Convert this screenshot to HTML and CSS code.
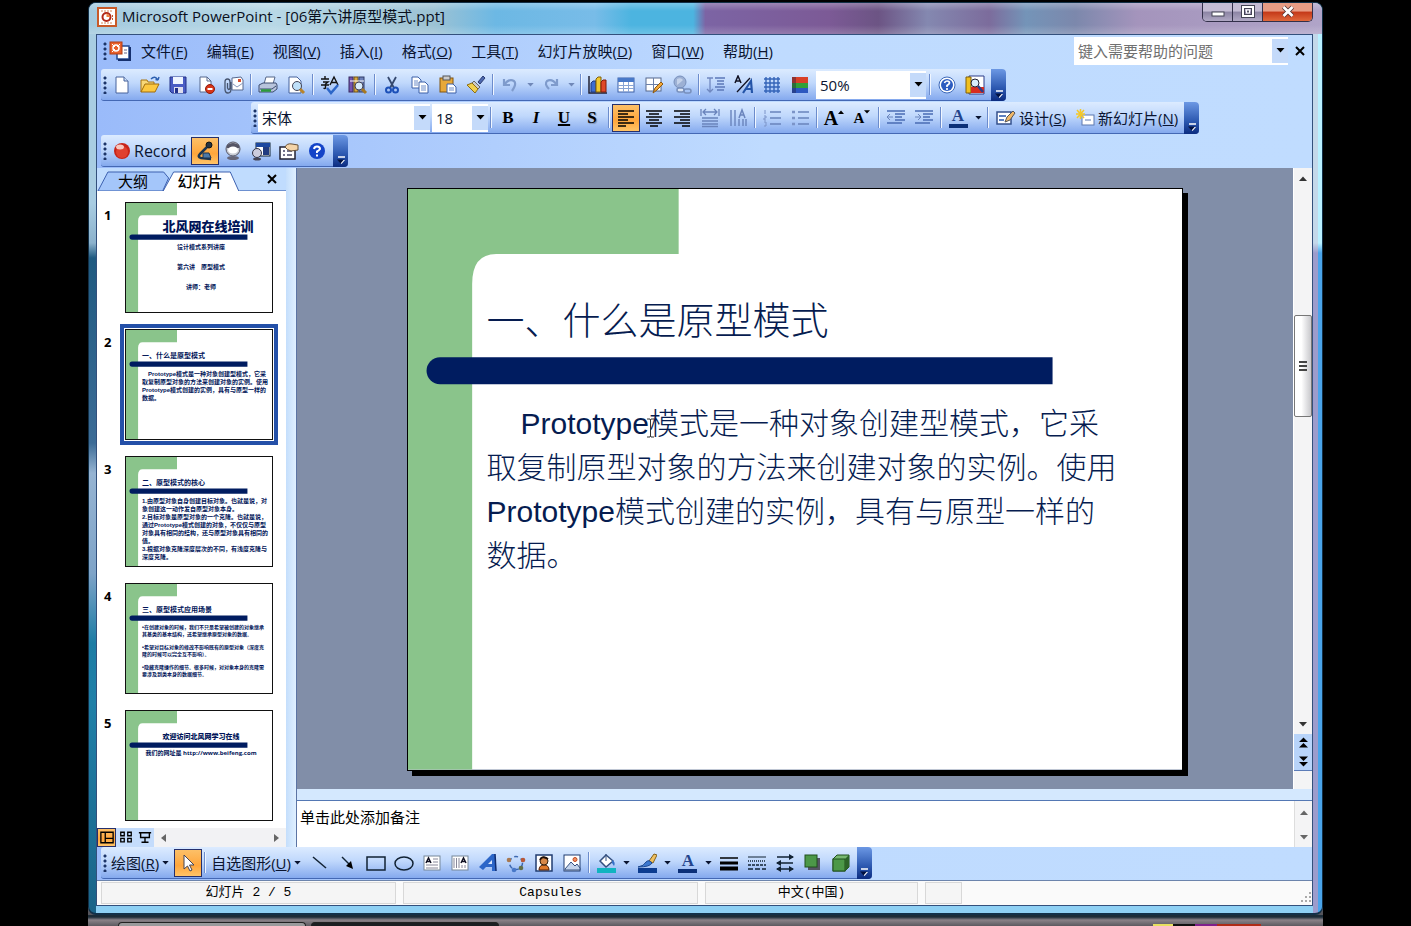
FILE: index.html
```html
<!DOCTYPE html>
<html lang="zh-CN">
<head>
<meta charset="utf-8">
<title>Microsoft PowerPoint - [06第六讲原型模式.ppt]</title>
<link rel="stylesheet" href="styles.css">
</head>
<body>
<svg class="defs" aria-hidden="true">
  <symbol id="slide-art" viewBox="0 0 773 580" preserveAspectRatio="none">
    <rect width="773" height="580" fill="#fff"/>
    <path d="M0 0H270V65H88Q64 65 64 95V580H0Z" fill="#8ac48b"/>
    <path d="M32 168H643V195H32A13.500 13.500 0 0 1 32 168Z" fill="#001c60"/>
  </symbol>
  <symbol id="down" viewBox="0 0 8 5"><path d="M0 0H8L4 4.500Z" fill="currentColor"/></symbol>
  <symbol id="up" viewBox="0 0 8 5"><path d="M0 5H8L4 0.500Z" fill="currentColor"/></symbol>
  <symbol id="more" viewBox="0 0 10 10"><path d="M2 1H9" stroke="#fff" stroke-width="1.500"/><path d="M2 4H9L5.500 8Z" fill="#fff"/><path d="M1 3.500H8L4.500 7.500Z" fill="#001040"/></symbol>
</svg>
<div class="desktop">
<div class="window">
  <header class="titlebar">
    <svg class="app-icon" viewBox="0 0 20 20"><rect x="1" y="1" width="18" height="18" fill="#fff" stroke="#c85a28" stroke-width="2"/><path d="M4 4H16M4 16H16" stroke="#d88858" stroke-dasharray="2 1"/><circle cx="9.500" cy="10" r="4" fill="none" stroke="#b02818" stroke-width="2"/><path d="M9.500 10V6L13.500 10Z" fill="#f08038"/><path d="M15.500 8V13" stroke="#c85a28" stroke-dasharray="2 1"/></svg>
    <h1 class="title">Microsoft PowerPoint - [06第六讲原型模式.ppt]</h1>
    <div class="win-buttons">
      <button type="button" aria-label="最小化"><svg viewBox="0 0 16 14"><rect x="2" y="7" width="12" height="4" fill="#fff" stroke="#445"/></svg></button>
      <button type="button" aria-label="还原"><svg viewBox="0 0 16 14"><rect x="3" y="2" width="10" height="9" fill="none" stroke="#445" stroke-width="4"/><rect x="3" y="2" width="10" height="9" fill="none" stroke="#fff" stroke-width="2"/><rect x="6.500" y="5" width="3" height="3" fill="#556" stroke="#fff"/></svg></button>
      <button type="button" class="close" aria-label="关闭"><svg viewBox="0 0 16 14"><path d="M3.500 2L12.500 11M12.500 2L3.500 11" stroke="#533" stroke-width="4.500"/><path d="M3.500 2L12.500 11M12.500 2L3.500 11" stroke="#fff" stroke-width="2.800"/></svg></button>
    </div>
  </header>
  <div class="client">
    <nav class="menubar">
      <i class="grip"></i>
      <svg class="doc-icon" viewBox="0 0 22 20"><path d="M8 5H20V18H8Z" fill="#fff" stroke="#234a94" stroke-width="1.500"/><path d="M21 6V19H9" stroke="#16306e" stroke-width="2" fill="none"/><rect x="1" y="1" width="12" height="12" fill="#e8602c" stroke="#b03c14"/><circle cx="7" cy="7" r="3" stroke="#fff" stroke-width="1.500" fill="none"/><path d="M3 3L6 6M11 3L8 6M3 11L6 8" stroke="#fff"/><path d="M15 9H18M15 12H18" stroke="#668"/></svg>
      <div class="menus">
        <button type="button">文件(<u>F</u>)</button><button type="button">编辑(<u>E</u>)</button><button type="button">视图(<u>V</u>)</button><button type="button">插入(<u>I</u>)</button><button type="button">格式(<u>O</u>)</button><button type="button">工具(<u>T</u>)</button><button type="button">幻灯片放映(<u>D</u>)</button><button type="button">窗口(<u>W</u>)</button><button type="button">帮助(<u>H</u>)</button>
      </div>
      <div class="combo help">
        <input type="text" placeholder="键入需要帮助的问题" aria-label="键入需要帮助的问题">
        <button type="button" class="drop" aria-label="展开"><svg><use href="#down"/></svg></button>
      </div>
      <button type="button" class="doc-close" aria-label="关闭文档"><svg viewBox="0 0 10 10"><path d="M1 1L9 9M9 1L1 9" stroke="#000" stroke-width="2"/></svg></button>
    </nav>

    <div class="bar">
      <div class="tools">
        <i class="grip"></i>
        <button type="button" class="tb" aria-label="新建"><svg viewBox="0 0 20 20"><path d="M4 2H12L16 6V18H4Z" fill="#fff" stroke="#46629c"/><path d="M12 2V6H16" fill="#cfe0f8" stroke="#46629c"/></svg></button>
        <button type="button" class="tb" aria-label="打开"><svg viewBox="0 0 20 20"><path d="M1 17V5H7L8 7H14V10" fill="#f8d878" stroke="#a87410"/><path d="M1 17L5 9H19L15 17Z" fill="#fcc840" stroke="#a06c0c"/><path d="M11 4Q15 0 18 5M18 5L15.500 4.500M18 5L19 2" stroke="#2c5fb0" fill="none" stroke-width="1.400"/></svg></button>
        <button type="button" class="tb" aria-label="保存"><svg viewBox="0 0 20 20"><path d="M2 2H18V18H4L2 16Z" fill="#4a5cc4" stroke="#223088"/><rect x="5" y="2" width="10" height="7" fill="#eef4ff"/><rect x="6" y="12" width="9" height="6" fill="#dde"/><rect x="7" y="13" width="3" height="5" fill="#223088"/></svg></button>
        <button type="button" class="tb" aria-label="权限"><svg viewBox="0 0 20 20"><path d="M4 2H11L15 6V17H4Z" fill="#fff" stroke="#56688e"/><path d="M11 2V6H15" fill="none" stroke="#56688e"/><circle cx="14" cy="14" r="4.500" fill="#d83418" stroke="#901c0c"/><path d="M11.500 14H16.500" stroke="#fff" stroke-width="2"/></svg></button>
        <button type="button" class="tb" aria-label="电子邮件"><svg viewBox="0 0 20 20"><path d="M8 3L17 2L19 5V15H8Z" fill="#fff" stroke="#56688e"/><path d="M9 9L13 12L19 8" fill="none" stroke="#8899bb"/><rect x="14" y="4" width="3" height="3" fill="#d85030"/><path d="M7 7V14Q7 18 4 18Q1 18 1 14V7Q1 4 3.500 4Q6 4 6 7V13Q5 16 3.500 13V8" stroke="#46546e" fill="none" stroke-width="1.300"/></svg></button>
        <i class="sep"></i>
        <button type="button" class="tb" aria-label="打印"><svg viewBox="0 0 20 20"><path d="M6 9L8 2H17L15 9Z" fill="#fff" stroke="#556688"/><path d="M1 10L5 8H18L19 10V14L15 17H1Z" fill="#b8c4dc" stroke="#3c4c70"/><path d="M2 14H14L18 11" stroke="#3c4c70" fill="none"/><path d="M3 15.500H13" stroke="#2c9a3c" stroke-width="2.500"/></svg></button>
        <button type="button" class="tb" aria-label="打印预览"><svg viewBox="0 0 20 20"><path d="M3 2H11L15 6V18H3Z" fill="#fff" stroke="#46629c"/><circle cx="11" cy="11" r="4.500" fill="#bfe0f8" stroke="#445"/><path d="M14 14L18 18" stroke="#b8842c" stroke-width="3"/></svg></button>
        <i class="sep"></i>
        <button type="button" class="tb" aria-label="拼写检查"><svg viewBox="0 0 20 20"><path d="M1 4H9M5 1V4M3 7H8L5.500 9V13Q5 14 3.500 13M1 10H9" stroke="#111" fill="none" stroke-width="1.400"/><path d="M10 10L14 2L18 10M11.500 7.500H17" stroke="#111" fill="none" stroke-width="1.400"/><path d="M7 13L11 18L18 10" stroke="#2c66c8" fill="none" stroke-width="2.500"/></svg></button>
        <button type="button" class="tb" aria-label="信息检索"><svg viewBox="0 0 20 20"><rect x="1" y="2" width="4" height="15" fill="#7454b0" stroke="#38285e"/><rect x="6" y="2" width="4" height="15" fill="#d8a840" stroke="#6e5010"/><rect x="11" y="2" width="5" height="15" fill="#6c80b8" stroke="#303c68"/><path d="M2 6H16" stroke="#fff"/><circle cx="11" cy="11" r="4" fill="#d8ecfc" stroke="#445"/><path d="M14 14L18 18" stroke="#a87820" stroke-width="3"/></svg></button>
        <i class="sep"></i>
        <button type="button" class="tb" aria-label="剪切"><svg viewBox="0 0 20 20"><path d="M6 2L12 13M14 2L8 13" stroke="#34486e" stroke-width="1.800"/><circle cx="6.500" cy="15" r="2.500" fill="none" stroke="#1c50b8" stroke-width="2"/><circle cx="13.500" cy="15" r="2.500" fill="none" stroke="#1c50b8" stroke-width="2"/></svg></button>
        <button type="button" class="tb" aria-label="复制"><svg viewBox="0 0 20 20"><path d="M2 2H8L11 5V13H2Z" fill="#fff" stroke="#3c60a8"/><path d="M9 7H15L18 10V18H9Z" fill="#fff" stroke="#3c60a8"/><path d="M4 6H8M4 8H8M4 10H8M11 11H16M11 13H16M11 15H16" stroke="#6c8cc8"/></svg></button>
        <button type="button" class="tb" aria-label="粘贴"><svg viewBox="0 0 20 20"><rect x="2" y="3" width="13" height="14" fill="#e8a838" stroke="#805410"/><rect x="5" y="1" width="7" height="4" fill="#ccc" stroke="#555"/><path d="M9 9H15L18 12V18H9Z" fill="#fff" stroke="#3c60a8"/><path d="M11 13H16M11 15H16" stroke="#6c8cc8"/></svg></button>
        <button type="button" class="tb" aria-label="格式刷"><svg viewBox="0 0 20 20"><path d="M12 7L17 1L19 3L14 9Z" fill="#4c68b0" stroke="#2c3c70"/><path d="M8 6L14 12L12 14L6 8Z" fill="#ccc" stroke="#666"/><path d="M6 8L12 14L9 18L1 10Z" fill="#f0d050" stroke="#8c6c10"/></svg></button>
        <i class="sep"></i>
        <button type="button" class="tb off" aria-label="撤消"><svg viewBox="0 0 20 20"><path d="M4 4V10H10M4 10Q9 3 14 6Q17 9 12 16" stroke="#7f9bcc" stroke-width="2.200" fill="none"/></svg></button>
        <button type="button" class="arr off" aria-label="撤消列表"><svg><use href="#down"/></svg></button>
        <button type="button" class="tb off" aria-label="恢复"><svg viewBox="0 0 20 20"><path d="M16 4V10H10M16 10Q11 3 6 6Q3 9 8 14" stroke="#7f9bcc" stroke-width="2.200" fill="none"/></svg></button>
        <button type="button" class="arr off" aria-label="恢复列表"><svg><use href="#down"/></svg></button>
        <i class="sep"></i>
        <button type="button" class="tb" aria-label="插入图表"><svg viewBox="0 0 20 20"><path d="M1 1V18H19" stroke="#223" fill="none" stroke-width="1.500"/><path d="M3 8L5 6H8V17H3Z" fill="#3c6cd0" stroke="#1c3880"/><path d="M8 4L10 2H13V17H8Z" fill="#f0c830" stroke="#806008"/><path d="M13 7L15 5H18V17H13Z" fill="#e04828" stroke="#801c08"/></svg></button>
        <button type="button" class="tb" aria-label="插入表格"><svg viewBox="0 0 20 20"><rect x="2" y="3" width="16" height="14" fill="#fff" stroke="#3c60a8"/><rect x="2" y="3" width="16" height="4" fill="#4878c8"/><path d="M2 10.500H18M2 13.500H18M7.500 7V17M12.500 7V17" stroke="#88a4d4"/></svg></button>
        <button type="button" class="tb" aria-label="表格和边框"><svg viewBox="0 0 20 20"><rect x="2" y="3" width="15" height="13" fill="#fff" stroke="#56688e"/><path d="M2 9.500H17M9.500 3V16" stroke="#6c80a8"/><path d="M9 18L11 13L17 7L19 9L13 15Z" fill="#f4a838" stroke="#8c5810"/></svg></button>
        <button type="button" class="tb off" aria-label="超链接"><svg viewBox="0 0 20 20"><circle cx="8" cy="7" r="6" fill="#9cb0d4" stroke="#7890bc"/><path d="M5 4Q9 2 11 5Q8 8 5 10" fill="#c4d2ea"/><rect x="5" y="13" width="7" height="4" rx="2" fill="#dde6f4" stroke="#7890bc" stroke-width="1.500"/><rect x="12" y="14" width="7" height="4" rx="2" fill="none" stroke="#7890bc" stroke-width="1.500"/></svg></button>
        <i class="sep"></i>
        <button type="button" class="tb" aria-label="全部展开"><svg viewBox="0 0 20 20"><path d="M4 3V17M1 14L4 17L7 14M1 3H7" stroke="#7088c0" fill="none" stroke-width="1.300"/><path d="M9 3H19M11 6H18M11 9H18M9 12H19M11 15H18" stroke="#5c78b8" stroke-width="1.300"/></svg></button>
        <button type="button" class="tb" aria-label="显示格式"><svg viewBox="0 0 20 20"><path d="M1 8L4 1L7 8M2 6H6" stroke="#112" fill="none" stroke-width="1.500"/><path d="M3 17L16 3" stroke="#112" stroke-width="1.300"/><path d="M9 18L17 6L18 18M12 14H18" stroke="#2454a8" fill="none" stroke-width="2.200"/></svg></button>
        <button type="button" class="tb" aria-label="网格"><svg viewBox="0 0 20 20"><path d="M4 2V18M8 2V18M12 2V18M16 2V18M2 4H18M2 8H18M2 12H18M2 16H18" stroke="#3464b8" stroke-width="1.400"/></svg></button>
        <button type="button" class="tb" aria-label="颜色/灰度"><svg viewBox="0 0 20 20"><rect x="2" y="2" width="16" height="16" fill="#2c58c0"/><rect x="2" y="2" width="16" height="6" fill="#d84028"/><rect x="2" y="8" width="16" height="5" fill="#30a038"/><rect x="2" y="2" width="4" height="16" fill="#202040" opacity="0.400"/></svg></button>
        <label class="combo zoom"><select aria-label="显示比例"><option>50%</option></select><span class="drop"><svg><use href="#down"/></svg></span></label>
        <i class="sep"></i>
        <button type="button" class="tb" aria-label="帮助"><svg viewBox="0 0 20 20"><circle cx="10" cy="10" r="8" fill="#fff" stroke="#3c68b8"/><circle cx="10" cy="10" r="6" fill="#2c5cc0"/><path d="M7.500 8Q8 6 10 6Q12.500 6 12.500 8Q12 9.500 10 10.500V12M10 13V15" stroke="#fff" stroke-width="1.700" fill="none"/></svg></button>
        <button type="button" class="tb" aria-label="查找"><svg viewBox="0 0 20 20"><path d="M4 1H19V19H4Z" fill="#fff" stroke="#2c3c88"/><path d="M1 2H6V18H1Z" fill="#f0c020" stroke="#806008"/><path d="M6 12H19V18H6Z" fill="#d82c20"/><circle cx="10" cy="8" r="4" fill="#d8ecfc" stroke="#223"/><path d="M13 11L18 17" stroke="#2c3c88" stroke-width="2.500"/></svg></button>
        <button type="button" class="cap" aria-label="工具栏选项"><svg><use href="#more"/></svg></button>
      </div>
    </div>

    <div class="bar">
      <div class="tools format">
        <i class="grip"></i>
        <label class="combo font"><select aria-label="字体"><option>宋体</option></select><span class="drop"><svg><use href="#down"/></svg></span></label>
        <label class="combo size"><select aria-label="字号"><option>18</option></select><span class="drop"><svg><use href="#down"/></svg></span></label>
        <i class="sep"></i>
        <button type="button" class="tb serif"><b>B</b></button>
        <button type="button" class="tb serif"><b><em>I</em></b></button>
        <button type="button" class="tb serif"><b><u>U</u></b></button>
        <button type="button" class="tb serif"><b class="shadow">S</b></button>
        <i class="sep"></i>
        <button type="button" class="tb on" aria-label="左对齐"><svg viewBox="0 0 20 20"><path d="M2 3H18M2 6H12M2 9H18M2 12H12M2 15H18M2 18H10" stroke="#000" stroke-width="1.600"/></svg></button>
        <button type="button" class="tb" aria-label="居中"><svg viewBox="0 0 20 20"><path d="M2 3H18M5 6H15M2 9H18M5 12H15M2 15H18M6 18H14" stroke="#000" stroke-width="1.600"/></svg></button>
        <button type="button" class="tb" aria-label="右对齐"><svg viewBox="0 0 20 20"><path d="M2 3H18M8 6H18M2 9H18M8 12H18M2 15H18M10 18H18" stroke="#000" stroke-width="1.600"/></svg></button>
        <button type="button" class="tb" aria-label="分散对齐"><svg viewBox="0 0 20 20"><path d="M1 1V8M19 1V8M3 4H17M6 1L3 4L6 7M14 1L17 4L14 7" stroke="#6a84bc" fill="none" stroke-width="1.300"/><path d="M2 10H18M2 13H18M2 16H18M2 18.500H18" stroke="#6a84bc" stroke-width="1.500"/></svg></button>
        <button type="button" class="tb" aria-label="更改文字方向"><svg viewBox="0 0 20 20"><path d="M3 2V18M7 2V18M11 11V18M15 11V18M18 11V18" stroke="#6a84bc" stroke-width="1.400"/><path d="M11 10L14 2L17 10M12 7H16" stroke="#6a84bc" fill="none" stroke-width="1.500"/></svg></button>
        <i class="sep"></i>
        <button type="button" class="tb" aria-label="编号"><svg viewBox="0 0 20 20"><path d="M8 4H19M8 10H19M8 16H19" stroke="#6a84bc" stroke-width="1.500"/><path d="M3 2V6M2 8H4V10H2V12H4M2 14H4V18H2" stroke="#7c94c8" fill="none"/></svg></button>
        <button type="button" class="tb" aria-label="项目符号"><svg viewBox="0 0 20 20"><path d="M8 4H19M8 10H19M8 16H19" stroke="#6a84bc" stroke-width="1.500"/><path d="M2 4H5M2 10H5M2 16H5" stroke="#7c94c8" stroke-width="2.500"/></svg></button>
        <i class="sep"></i>
        <button type="button" class="tb serif grow"><b>A</b><svg class="mark"><use href="#up"/></svg></button>
        <button type="button" class="tb serif shrink"><b>A</b><svg class="mark"><use href="#down"/></svg></button>
        <i class="sep"></i>
        <button type="button" class="tb" aria-label="减少缩进"><svg viewBox="0 0 20 20"><path d="M1 3H19M9 6H19M9 9H16M9 12H19M1 15H16" stroke="#4a6cb4" stroke-width="1.500"/><path d="M7 9H1M4 6L1 9L4 12" stroke="#6a84bc" fill="none"/></svg></button>
        <button type="button" class="tb" aria-label="增加缩进"><svg viewBox="0 0 20 20"><path d="M1 3H19M9 6H19M9 9H16M9 12H19M1 15H16" stroke="#4a6cb4" stroke-width="1.500"/><path d="M1 9H7M4 6L7 9L4 12" stroke="#6a84bc" fill="none"/></svg></button>
        <i class="sep"></i>
        <button type="button" class="tb serif color"><b>A</b></button>
        <button type="button" class="arr" aria-label="字体颜色列表"><svg><use href="#down"/></svg></button>
        <i class="sep"></i>
        <button type="button" class="wide"><svg viewBox="0 0 20 20"><rect x="1" y="4" width="14" height="12" fill="#fff" stroke="#34508c" stroke-width="1.500"/><path d="M3 8H10M3 12H8" stroke="#5c80c0" stroke-width="2"/><path d="M9 14L11 9L17 3L19 5L14 12Z" fill="#f0b868" stroke="#555"/></svg><span>设计(<u>S</u>)</span></button>
        <button type="button" class="wide"><svg viewBox="0 0 20 20"><rect x="7" y="7" width="12" height="10" fill="#fff" stroke="#5c78b0"/><path d="M10 12H16" stroke="#5c78b0"/><path d="M5.500 1V11M1 6H10M2 2L9 10M9 2L2 10" stroke="#f4c828" stroke-width="1.500"/></svg><span>新幻灯片(<u>N</u>)</span></button>
        <button type="button" class="cap" aria-label="工具栏选项"><svg><use href="#more"/></svg></button>
      </div>
    </div>

    <div class="bar">
      <div class="tools">
        <i class="grip"></i>
        <button type="button" class="wide record"><svg viewBox="0 0 20 20"><circle cx="10" cy="10" r="8" fill="#c82418"/><circle cx="10" cy="11" r="6" fill="#e04030"/><ellipse cx="8" cy="6" rx="4" ry="2.500" fill="#f8c8c0"/></svg><span>Record</span></button>
        <button type="button" class="tb on" aria-label="麦克风"><svg viewBox="0 0 20 20"><circle cx="14" cy="4" r="3" fill="#234" stroke="#111"/><path d="M12 6L5 13Q2 16 6 17L16 18" stroke="#1c3450" stroke-width="2.500" fill="none"/><path d="M8 12L14 12L16 17H8Z" fill="#4c78a8" stroke="#1c3450"/></svg></button>
        <button type="button" class="tb" aria-label="摄像头"><svg viewBox="0 0 20 20"><circle cx="10" cy="8" r="7" fill="#c8ccd4" stroke="#556"/><path d="M4 4Q10 0 16 4V7H4Z" fill="#556"/><ellipse cx="10" cy="9" rx="5" ry="3.500" fill="#fff"/><ellipse cx="10" cy="17" rx="6" ry="2" fill="#667"/></svg></button>
        <button type="button" class="tb" aria-label="摄像头预览"><svg viewBox="0 0 20 20"><rect x="5" y="2" width="14" height="13" fill="#fff" stroke="#123"/><rect x="5" y="2" width="14" height="4" fill="#1c48a0"/><rect x="12" y="6" width="6" height="8" fill="#223c80"/><circle cx="6" cy="12" r="4.500" fill="#ccd" stroke="#334"/><ellipse cx="6" cy="18" rx="4" ry="1.500" fill="#445"/></svg></button>
        <button type="button" class="tb" aria-label="录制选项"><svg viewBox="0 0 20 20"><rect x="1" y="6" width="15" height="12" fill="#fff" stroke="#223" stroke-width="1.500"/><path d="M4 10H6M8 10H13M4 14H6M8 14H13" stroke="#446" stroke-width="1.500"/><path d="M6 6Q8 2 13 3L19 4V9L12 10Q8 9 6 6Z" fill="#f4d4a8" stroke="#665038"/></svg></button>
        <button type="button" class="tb" aria-label="录制帮助"><svg viewBox="0 0 20 20"><circle cx="10" cy="10" r="8" fill="#1444c8"/><path d="M7 8Q7.500 5.500 10 5.500Q13 5.500 13 8Q12 9.500 10 10.500V12M10 13.500V15.500" stroke="#fff" stroke-width="2" fill="none"/></svg></button>
        <button type="button" class="cap" aria-label="工具栏选项"><svg><use href="#more"/></svg></button>
      </div>
    </div>

    <main class="work">
      <aside class="pane">
        <div class="tabs">
          <svg class="tab-art" viewBox="0 0 190 23" preserveAspectRatio="none"><path d="M1 23L11 4H67L72 10L66 23Z" fill="#a4c6fa" stroke="#3c60b0"/><path d="M66 24L77 4H134L143 24Z" fill="#fff" stroke="#3c60b0"/><path d="M143 22.500H190" stroke="#6c90d0"/></svg>
          <button type="button" class="tab">大纲</button><button type="button" class="tab active">幻灯片</button>
          <button type="button" class="pane-close" aria-label="关闭窗格"><svg viewBox="0 0 10 10"><path d="M1 1L9 9M9 1L1 9" stroke="#000" stroke-width="2"/></svg></button>
        </div>
        <ol class="thumbs">
          <li><span class="num">1</span><div class="thumb center big"><svg class="art"><use href="#slide-art"/></svg><h3>北风网在线培训</h3><p>设计模式系列讲座</p><p>第六讲　原型模式</p><p>讲师：老师</p></div></li>
          <li><span class="num">2</span><div class="thumb selected"><svg class="art"><use href="#slide-art"/></svg><h3>一、什么是原型模式</h3><p class="m">　Prototype模式是一种对象创建型模式，它采<br>取复制原型对象的方法来创建对象的实例。使用<br>Prototype模式创建的实例，具有与原型一样的<br>数据。</p></div></li>
          <li><span class="num">3</span><div class="thumb"><svg class="art"><use href="#slide-art"/></svg><h3>二、原型模式的核心</h3><p class="m">1.由原型对象自身创建目标对象。也就是说，对<br>象创建这一动作发自原型对象本身。<br>2.目标对象是原型对象的一个克隆。也就是说，<br>通过Prototype模式创建的对象，不仅仅与原型<br>对象具有相同的结构，还与原型对象具有相同的<br>值。<br>3.根据对象克隆深度层次的不同，有浅度克隆与<br>深度克隆。</p></div></li>
          <li><span class="num">4</span><div class="thumb"><svg class="art"><use href="#slide-art"/></svg><h3>三、原型模式应用场景</h3><p class="s">•在创建对象的时候，我们不只是希望被创建的对象继承<br>其基类的基本结构，还希望继承原型对象的数据。</p><p class="s">•希望对目标对象的修改不影响既有的原型对象（深度克<br>隆的时候可以完全互不影响）。</p><p class="s">•隐藏克隆操作的细节。很多时候，对对象本身的克隆需<br>要涉及到类本身的数据细节。</p></div></li>
          <li><span class="num">5</span><div class="thumb center last"><svg class="art"><use href="#slide-art"/></svg><h3>欢迎访问北风网学习在线</h3><p>我们的网址是 http://www.beifeng.com</p></div></li>
        </ol>
        <div class="views">
          <button type="button" class="vw on" aria-label="普通视图"><svg viewBox="0 0 16 14"><path d="M1 1H15V13H1ZM6 1V13M6 8H15" fill="none" stroke="#000" stroke-width="1.500"/></svg></button>
          <button type="button" class="vw" aria-label="幻灯片浏览视图"><svg viewBox="0 0 16 14"><path d="M2 1H6V5H2ZM10 1H14V5H10ZM2 8H6V12H2ZM10 8H14V12H10Z" fill="none" stroke="#000" stroke-width="1.500"/></svg></button>
          <button type="button" class="vw" aria-label="幻灯片放映"><svg viewBox="0 0 16 14"><path d="M1 1.500H15M3 2V7H13V2M8 7V12M4 12.500H12" fill="none" stroke="#000" stroke-width="1.600"/></svg></button>
          <div class="hscroll"><svg viewBox="0 0 5 8"><path d="M5 0V8L0 4Z" fill="#666"/></svg><svg viewBox="0 0 5 8"><path d="M0 0V8L5 4Z" fill="#666"/></svg></div>
        </div>
      </aside>
      <div class="split"></div>
      <section class="editor">
        <div class="stage">
          <div class="canvas">
            <article class="slide">
              <svg class="art"><use href="#slide-art"/></svg>
              <h2>一、什么是原型模式</h2>
              <p><span class="indent"></span>Prototype模式是一种对象创建型模式，它采<br>取复制原型对象的方法来创建对象的实例。使用<br>Prototype模式创建的实例，具有与原型一样的<br>数据。</p>
              <svg class="ibeam" viewBox="0 0 9 20"><path d="M1 1H4L4.500 2L5 1H8M4.500 2V18M1 19H4L4.500 18L5 19H8" fill="none" stroke="#333"/></svg>
            </article>
          </div>
          <div class="vscroll">
            <button type="button" aria-label="向上滚动"><svg><use href="#up"/></svg></button>
            <div class="track"><div class="thumb-grip"><i></i><i></i><i></i></div></div>
            <button type="button" aria-label="向下滚动"><svg><use href="#down"/></svg></button>
            <div class="jump">
              <button type="button" aria-label="上一张幻灯片"><svg viewBox="0 0 10 12"><path d="M5 0L10 5H0ZM5 6L10 11H0Z"/></svg></button>
              <button type="button" aria-label="下一张幻灯片"><svg viewBox="0 0 10 12"><path d="M5 6L10 1H0ZM5 12L10 7H0Z"/></svg></button>
            </div>
          </div>
        </div>
        <div class="hsplit"></div>
        <div class="notes">
          <textarea aria-label="备注" placeholder="单击此处添加备注"></textarea>
          <div class="nscroll"><svg><use href="#up"/></svg><svg><use href="#down"/></svg></div>
        </div>
      </section>
    </main>

    <div class="bar draw">
      <div class="tools">
        <i class="grip"></i>
        <button type="button" class="wide menu"><span>绘图(<u>R</u>)</span><svg class="a"><use href="#down"/></svg></button>
        <button type="button" class="tb on" aria-label="选择对象"><svg viewBox="0 0 20 20"><path d="M6 2V16L9.500 13L12 18L14 17L11.500 12H16Z" fill="#fff" stroke="#445"/></svg></button>
        <i class="sep"></i>
        <button type="button" class="wide menu"><span>自选图形(<u>U</u>)</span><svg class="a"><use href="#down"/></svg></button>
        <button type="button" class="tb" aria-label="直线"><svg viewBox="0 0 20 20"><path d="M3 4L16 15" stroke="#123" stroke-width="1.500"/></svg></button>
        <button type="button" class="tb" aria-label="箭头"><svg viewBox="0 0 20 20"><path d="M4 4L12 12" stroke="#123" stroke-width="1.500"/><path d="M15 16L8 13L13 8Z"/></svg></button>
        <button type="button" class="tb" aria-label="矩形"><svg viewBox="0 0 20 20"><rect x="1" y="4" width="18" height="13" fill="none" stroke="#123" stroke-width="1.500"/></svg></button>
        <button type="button" class="tb" aria-label="椭圆"><svg viewBox="0 0 20 20"><ellipse cx="10" cy="10.500" rx="9" ry="6.500" fill="none" stroke="#123" stroke-width="1.500"/></svg></button>
        <button type="button" class="tb" aria-label="文本框"><svg viewBox="0 0 20 20"><rect x="2" y="3" width="16" height="14" fill="#fff" stroke="#789"/><path d="M4 10L6.500 5L9 10M5 8.500H8" stroke="#112" stroke-width="1.500" fill="none"/><path d="M11 6H16M11 9H16M4 12H16M4 15H16" stroke="#889"/></svg></button>
        <button type="button" class="tb" aria-label="竖排文本框"><svg viewBox="0 0 20 20"><rect x="2" y="3" width="16" height="14" fill="#fff" stroke="#789"/><path d="M11 10L13.500 5L16 10M12 8.500H15" stroke="#112" stroke-width="1.500" fill="none"/><path d="M4 5V15M6.500 5V15M9 5V15M12 12V15M15 12V15" stroke="#889"/></svg></button>
        <button type="button" class="tb" aria-label="艺术字"><svg viewBox="0 0 20 20"><path d="M1 14L14 1H17L18 18H14V14H8L5 17Z" fill="#2c66c8"/><path d="M10 11L14 7V11Z" fill="#dce8fc"/><path d="M17 1L18 18" stroke="#102c70" stroke-width="1.500"/></svg></button>
        <button type="button" class="tb" aria-label="图示"><svg viewBox="0 0 20 20"><circle cx="10" cy="10" r="6.500" fill="none" stroke="#3c68b0" stroke-width="1.500" stroke-dasharray="4 3"/><circle cx="3" cy="7" r="2.300" fill="#a87850"/><circle cx="17" cy="7" r="2.300" fill="#b85838"/><circle cx="15" cy="15" r="2.300" fill="#607048"/><circle cx="8" cy="17" r="2.300" fill="#4878c8"/></svg></button>
        <button type="button" class="tb" aria-label="剪贴画"><svg viewBox="0 0 20 20"><rect x="2" y="2" width="16" height="16" fill="#fff" stroke="#203c70" stroke-width="1.500"/><path d="M5 17Q5 12 10 12Q15 12 15 17Z" fill="#e07828" stroke="#502008"/><circle cx="10" cy="8" r="4" fill="#d88848" stroke="#302010"/><path d="M6 7Q8 2 14 6" stroke="#201008" stroke-width="2" fill="none"/></svg></button>
        <button type="button" class="tb" aria-label="插入图片"><svg viewBox="0 0 20 20"><rect x="2" y="2" width="16" height="16" fill="#fff" stroke="#203c70"/><path d="M3 16L9 9L13 13L15 11L18 15V17H3Z" fill="#c4d4ec" stroke="#345080"/><circle cx="13" cy="6.500" r="2" fill="#f09060" stroke="#c04820"/></svg></button>
        <i class="sep"></i>
        <button type="button" class="tb" aria-label="填充颜色"><svg viewBox="0 0 20 20"><path d="M4 8L10 2L17 8L10 14Z" fill="#fff" stroke="#345080" stroke-width="1.500"/><path d="M10 1V8" stroke="#345080"/><path d="M16 7Q20 9 18 13L16 10Z" fill="#3470c8"/><rect x="1" y="15" width="19" height="5" fill="#10b4c0"/></svg></button>
        <button type="button" class="arr" aria-label="填充颜色列表"><svg><use href="#down"/></svg></button>
        <button type="button" class="tb" aria-label="线条颜色"><svg viewBox="0 0 20 20"><path d="M12 8L17 1L20 2L16 10Z" fill="#f0c060" stroke="#80601c"/><path d="M1 14Q7 13 9 9Q12 6 15 10Q13 14 1 14Z" fill="#3c78d0" stroke="#1c4890"/><rect x="1" y="15" width="19" height="5" fill="#0c3c90"/></svg></button>
        <button type="button" class="arr" aria-label="线条颜色列表"><svg><use href="#down"/></svg></button>
        <button type="button" class="tb serif color"><b>A</b></button>
        <button type="button" class="arr" aria-label="字体颜色列表"><svg><use href="#down"/></svg></button>
        <button type="button" class="tb" aria-label="线型"><svg viewBox="0 0 20 20"><path d="M1 5H19" stroke="#000" stroke-width="1.500"/><path d="M1 10H19" stroke="#000" stroke-width="3"/><path d="M1 15.500H19" stroke="#000" stroke-width="4"/></svg></button>
        <button type="button" class="tb" aria-label="虚线线型"><svg viewBox="0 0 20 20"><path d="M1 4H19" stroke="#123"/><path d="M1 8H19" stroke="#123" stroke-width="1.500" stroke-dasharray="1 1"/><path d="M1 12H19" stroke="#123" stroke-width="1.500" stroke-dasharray="3 1"/><path d="M1 16H19" stroke="#123" stroke-width="1.500" stroke-dasharray="5 2"/></svg></button>
        <button type="button" class="tb" aria-label="箭头样式"><svg viewBox="0 0 20 20"><path d="M2 4H18M2 10H18M2 16H18" stroke="#123" stroke-width="1.600"/><path d="M14 1L19 4L14 7ZM6 7L1 10L6 13ZM6 13L1 16L6 19ZM14 13L19 16L14 19Z" fill="#123"/></svg></button>
        <button type="button" class="tb" aria-label="阴影样式"><svg viewBox="0 0 20 20"><rect x="5" y="5" width="12" height="12" fill="#556"/><rect x="2" y="2" width="12" height="12" fill="#4c9848" stroke="#20501c"/></svg></button>
        <button type="button" class="tb" aria-label="三维效果样式"><svg viewBox="0 0 20 20"><path d="M2 6L6 2H18V14L14 18H2Z" fill="#78b870" stroke="#20501c"/><rect x="2" y="6" width="12" height="12" fill="#4c9848" stroke="#20501c"/><path d="M14 6L18 2V14L14 18Z" fill="#2c6428"/></svg></button>
        <button type="button" class="cap" aria-label="工具栏选项"><svg><use href="#more"/></svg></button>
      </div>
    </div>

    <footer class="status">
      <span class="cell">幻灯片 2 / 5</span><span class="cell">Capsules</span><span class="cell lang">中文(中国)</span><span class="cell tiny"></span>
      <svg class="resize" viewBox="0 0 12 12"><path d="M10 1V3M10 5V7M10 9V11M6 5V7M6 9V11M2 9V11" stroke="#aaa" stroke-width="2"/></svg>
    </footer>
  </div>
</div>
<div class="taskbar"><i class="task"></i><i class="task dark"></i><i class="tray"></i></div>
</div>
</body>
</html>
```
FILE: styles.css
```css
* { box-sizing: border-box; }
body {
  margin: 0;
  height: 100vh;
  overflow: hidden;
  background: #000;
  font: 15px/20px "Open Sans", "Noto Sans CJK SC", sans-serif;
  color: #0a1430;
}
button, select, input, textarea { font: inherit; color: inherit; border: 0; padding: 0; margin: 0; background: none; }
h1, h2, h3, p, ol { margin: 0; padding: 0; }
svg { display: block; }
.defs { position: absolute; width: 0; height: 0; }
.desktop { height: 100vh; margin: 0 88px; display: flex; flex-direction: column; background: linear-gradient(#000 50%, #55555c 50%); }

/* window frame */
.window {
  flex: 1;
  min-height: 0;
  display: flex;
  flex-direction: column;
  margin-top: 2px;
  padding: 0 9px 7px 7px;
  border: 1px solid #123048;
  border-width: 1px 1px 2px;
  border-radius: 8px;
  background:
    linear-gradient(#b8f0ff 0 240px, #4aa4ea 250px 100%) right top / 4px 100% no-repeat,
    linear-gradient(#c4d8ea 0 240px, #9c9ccc 250px 100%) right top / 9px 100% no-repeat,
    linear-gradient(#a9cde2 0 200px, #8cb2cc 240px, #1f5a80 255px, #3c6c96 440px, #96b4d2 470px, #7fa4c8 570px, #1c7ca4 640px, #2080a8 700px, #1a6488 100%) left top / 7px 100% no-repeat,
    #8ed0f4;
}
.titlebar {
  display: flex;
  align-items: flex-start;
  gap: 5px;
  height: 31px;
  margin: 0 -9px 0 -7px;
  padding-left: 8px;
  border-radius: 7px 7px 0 0;
  background:
    linear-gradient(#ffffff40, transparent 8px, transparent 22px, #ffffff30),
    linear-gradient(90deg, #a4cade 0, #b8d8e6 15%, #9cc2d4 28%, #6cb8e4 33%, #78bce8 41%, #4cb4e0 44%, #4cb4e0 49%, #7c64a4 50%, #7c5a96 60%, #6c5484 64%, #8488b0 68%, #7c6c9c 73%, #7494b8 76%, #7c88ac 80%, #a494bc 85%, #b0a4c8 100%);
}
.app-icon { width: 20px; height: 20px; margin-top: 4px; }
.title { flex: 1; font-size: 15px; line-height: 26px; font-weight: 400; color: #0a0f1c; }
.win-buttons { display: flex; margin-right: 9px; border: 1px solid #33304a; border-top: 0; border-radius: 0 0 5px 5px; overflow: hidden; }
.win-buttons button { width: 30px; height: 18px; display: grid; place-items: center; background: linear-gradient(#c4bcd4 45%, #8c84a4 50%, #b0a8c4); border-right: 1px solid #33304a; }
.win-buttons .close { width: 49px; border: 0; background: linear-gradient(#e89c84 45%, #c43818 50%, #e0683c); }
.win-buttons svg { width: 16px; height: 14px; }

.client {
  flex: 1;
  min-height: 0;
  display: flex;
  flex-direction: column;
  border: 1px solid #33507c;
  background: linear-gradient(90deg, #9abbfa, #bfdbff 55%, #c0dcff);
}

/* menu bar */
.menubar { display: flex; align-items: center; height: 34px; padding: 0 7px 3px 6px; }
.grip { flex: none; width: 5px; height: 18px; background: radial-gradient(circle at 2px 2px, #1c3468 1px, transparent 2px) 0 0 / 5px 5px; }
.doc-icon { width: 22px; height: 20px; margin: 0 10px 0 1px; }
.menus { display: flex; gap: 19px; flex: 1; }
.combo { display: flex; align-items: center; height: 28px; background: #fff; }
.combo select, .combo input { flex: 1; min-width: 0; appearance: none; outline: 0; padding-left: 4px; height: 26px; line-height: 24px; }
.drop { display: grid; place-items: center; width: 16px; height: 24px; background: #c4dafa; color: #000; }
.drop svg { width: 9px; height: 5px; }
.help { width: 214px; }
.help input::placeholder { color: #707070; opacity: 1; }
.doc-close { width: 10px; height: 10px; margin-left: 7px; }

/* toolbars */
.bar { display: flex; height: 33px; padding-left: 4px; }
.tools {
  display: flex;
  align-items: center;
  height: 32px;
  padding-left: 2px;
  border-radius: 3px 4px 4px 3px;
  border-bottom: 1px solid #4468b4;
  background: linear-gradient(#dcebff, #c0d8fc 45%, #84a9ee);
  white-space: nowrap;
}
.format { margin-left: 150px; }
.tb { display: grid; place-items: center; width: 28px; height: 28px; }
.tb svg, .wide svg { width: 20px; height: 20px; }
.on { background: linear-gradient(#fcc068, #ffa63c 60%, #ffc468); border: 1px solid #26306c; }
.arr { display: grid; place-items: center; width: 13px; height: 28px; }
.arr svg { width: 7px; height: 4px; }
.off { color: #7088b8; }
.sep { flex: none; width: 2px; height: 21px; margin: 0 2px; background: linear-gradient(90deg, #6c8ccc 50%, #f0f6ff 50%); }
.cap { display: flex; align-items: flex-end; justify-content: center; align-self: stretch; width: 15px; margin: 0 0 -1px 2px; padding-bottom: 1px; border-radius: 0 4px 4px 0; background: linear-gradient(#6c98e4, #2c58b0 60%, #0c2c80); }
.cap svg { width: 10px; height: 10px; }
.zoom { width: 110px; margin: 0 1px 0 2px; }
.font { width: 172px; }
.size { width: 56px; margin-left: 2px; }
.serif { font-family: "Liberation Serif", serif; font-size: 17px; color: #000; }
.serif u { text-decoration-thickness: 2px; }
.shadow { text-shadow: 1px 1px 1px #7888a8; }
.grow, .shrink { grid-template-columns: auto auto; justify-content: center; gap: 0; }
.grow { font-size: 20px; }
.shrink { font-size: 15px; }
.tb .mark { width: 6px; height: 4px; align-self: start; margin-top: 6px; }
.color b { border-bottom: 4px solid #0c3078; width: 19px; line-height: 16px; text-align: center; color: #24448c; }
.wide { display: flex; align-items: center; gap: 3px; padding: 0 4px 0 5px; height: 28px; }
.record { padding: 0 5px 0 4px; font-size: 16px; gap: 2px; }
.wide .a { width: 7px; height: 4px; margin-right: 3px; }
.menu { padding: 0 2px 0 3px; }

/* work area */
.work { flex: 1; min-height: 0; display: flex; }
.pane { width: 189px; display: flex; flex-direction: column; background: #fff; }
.tabs { position: relative; display: flex; height: 23px; background: #c0dcfe; color: #000; }
.tab-art { position: absolute; inset: 0; width: 100%; height: 100%; }
.tab { position: relative; width: 72px; padding-top: 3px; }
.tab.active { width: 62px; font-weight: 500; }
.pane-close { position: relative; width: 10px; height: 10px; margin: 6px 9px 0 auto; }
.pane-close svg, .doc-close svg { width: 10px; height: 10px; }
.thumbs { flex: 1; min-height: 0; overflow: hidden; list-style: none; padding-top: 11px; display: flex; flex-direction: column; gap: 16px; }
.thumbs li { display: flex; }
.num { width: 28px; padding: 3px 0 0 7px; font: 700 13px/20px "Open Sans", sans-serif; color: #000; }
.thumb { position: relative; width: 148px; height: 111px; border: 1px solid #111; color: #001458; padding: 21px 0 0 16px; }
.thumb.selected { outline: 4px solid #2450a8; outline-offset: 1px; }
.art { position: absolute; inset: 0; width: 100%; height: 100%; }
.thumb h3, .thumb p { position: relative; white-space: nowrap; }
.thumb h3 { font-size: 7px; line-height: 10px; margin-bottom: 9px; font-weight: 700; }
.thumb .m { font-size: 6px; line-height: 8px; font-weight: 700; font-family: "Liberation Sans", "Noto Sans CJK SC", sans-serif; }
.thumb .s { font-size: 5px; line-height: 7px; margin-bottom: 6px; font-weight: 700; }
.center { padding-left: 4px; text-align: center; }
.big { padding-top: 14px; }
.thumb.big h3 { font-size: 13px; line-height: 18px; margin: 0 0 8px 14px; font-weight: 900; }
.big p { font-size: 6px; line-height: 8px; margin-bottom: 12px; font-weight: 700; }
.thumb.last h3 { margin-bottom: 6px; font-weight: 900; }
.last p { font-size: 6px; line-height: 10px; font-weight: 700; }
.views { display: flex; height: 19px; background: #c4dcfc; }
.vw { width: 19px; height: 19px; display: grid; place-items: center; }
.vw svg { width: 14px; height: 13px; }
.hscroll { flex: 1; display: flex; align-items: center; justify-content: space-between; padding: 0 7px; background: #f2f2f4; }
.hscroll svg { width: 5px; height: 8px; }
.split { width: 10px; background: linear-gradient(90deg, #c4defc, #e0f0ff); }
.editor { flex: 1; min-width: 0; display: flex; flex-direction: column; border-left: 1px solid #5c74a4; }
.stage { flex: 1; min-height: 0; display: flex; background: #818ea8; }
.canvas { flex: 1; display: flex; justify-content: center; align-items: flex-start; padding-top: 20px; }
.slide {
  position: relative;
  width: 78%;
  aspect-ratio: 4 / 3;
  border: 1px solid #000;
  box-shadow: 5px 5px 0 #000;
  padding: 110px 0 0 79px;
  color: #061c50;
  font-family: "Liberation Sans", "Noto Sans CJK SC", sans-serif;
  font-weight: 300;
  white-space: nowrap;
}
.slide h2 { position: relative; font-size: 38px; line-height: 44px; font-weight: 300; margin-bottom: 59px; }
.slide p { position: relative; font-size: 30px; line-height: 44px; }
.indent { display: inline-block; width: 34px; }
.ibeam { position: absolute; left: 238px; top: 229px; width: 9px; height: 20px; }
.vscroll { width: 19px; display: flex; flex-direction: column; background: #f4f4f5; border-left: 1px solid #fff; color: #333; }
.vscroll > button { height: 20px; display: grid; place-items: center; }
.vscroll > button svg { width: 8px; height: 5px; }
.track { flex: 1; padding-top: 127px; }
.thumb-grip { height: 102px; border: 1px solid #777; border-radius: 2px; background: linear-gradient(90deg, #fff 40%, #c8c8cc); display: flex; flex-direction: column; align-items: center; justify-content: center; gap: 2px; }
.thumb-grip i { width: 8px; height: 2px; background: #444; }
.jump { height: 37px; margin-bottom: 18px; background: #b8d4fa; border-bottom: 1px solid #5c7cb8; display: grid; place-items: center; }
.jump button { height: 13px; }
.jump svg { width: 9px; height: 12px; fill: #000; }
.hsplit { height: 12px; background: #d4e8fe; border-bottom: 1px solid #5478b4; }
.notes { display: flex; height: 46px; background: #fff; }
.notes textarea { flex: 1; resize: none; outline: 0; padding: 6px 3px; height: 46px; overflow: hidden; }
.notes textarea::placeholder { color: #000; opacity: 1; }
.nscroll { width: 18px; display: flex; flex-direction: column; justify-content: space-between; align-items: center; padding: 9px 0 7px; background: #f4f4f5; color: #666; border-left: 1px solid #ddd; }
.nscroll svg { width: 8px; height: 5px; }

/* status bar */
.status { display: flex; gap: 7px; align-items: center; height: 25px; padding-left: 4px; background: #fafafa; border-top: 1px solid #6c84ac; font: 13px/20px "Liberation Mono", "Noto Sans CJK SC", monospace; color: #000; }
.cell { width: 295px; height: 22px; text-align: center; border: 1px solid #d8d8d8; background: #f5f5f5; white-space: pre; }
.lang { width: 213px; }
.tiny { width: 37px; }
.resize { width: 12px; height: 12px; margin: 8px 0 0 auto; }

.taskbar { display: flex; align-items: flex-end; gap: 5px; height: 11px; padding-left: 30px; background: linear-gradient(#1c2c38 0 2px, #8a8288 5px, #5c5a60); }
.task { width: 188px; height: 4px; border-radius: 4px 4px 0 0; border: 1px solid #222; border-bottom: 0; background: #9a9a9c; }
.task.dark { background: #1c1f22; }
.tray { width: 108px; height: 2px; margin: 0 62px 0 auto; background: linear-gradient(90deg, #e8e060 0 20px, #111 20px 42px, #80208c 42px 64px, #b02c18 64px 100%); }
```
